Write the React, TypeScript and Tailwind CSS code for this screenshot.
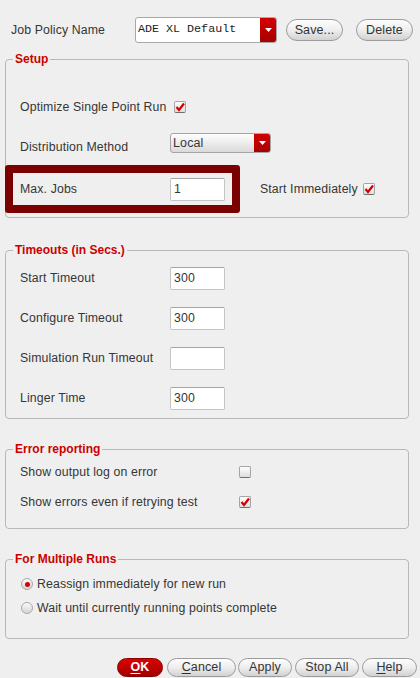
import type { ReactNode } from 'react';

function Check({ checked }: { checked?: boolean }) {
  return (
    <span className="relative flex h-[12px] w-[12px] shrink-0 items-center justify-center rounded-[2px] border border-[#a4a4a4] border-b-[#6f6f6f] bg-linear-to-b from-[#fdfdfd] to-[#dedede]">
      {checked ? (
        <svg width="10" height="10" viewBox="0 0 10 10">
          <path d="M1.5 5 L4 8 L9 1.5" fill="none" stroke="#d10000" strokeWidth="2.2" />
        </svg>
      ) : null}
    </span>
  );
}

function Radio({ on }: { on?: boolean }) {
  return (
    <span className="flex h-[12px] w-[12px] shrink-0 items-center justify-center rounded-full border border-[#a8a8a8] bg-linear-to-b from-[#fafafa] to-[#d4d4d4]">
      {on ? <span className="h-[5px] w-[5px] rounded-full bg-[#d60000]" /> : null}
    </span>
  );
}

function Arrow({ className }: { className: string }) {
  return (
    <span className={`flex items-center justify-center bg-linear-to-b from-[#d40000] to-[#a80000] ${className}`}>
      <svg width="7" height="4" viewBox="0 0 7 4">
        <path d="M0 0 H7 L3.5 4 Z" fill="#fff" />
      </svg>
    </span>
  );
}

function Field({ value }: { value?: string }) {
  return (
    <span className="flex h-[23px] w-[55px] shrink-0 items-center rounded-[2px] border border-[#c4c4c4] border-t-[#a6a6a6] bg-white pl-[3px] text-[12.3px]">
      {value}
    </span>
  );
}

function Btn({ children, className }: { children: ReactNode; className: string }) {
  return (
    <button className={`flex shrink-0 items-center justify-center rounded-full border border-[#9c9c9c] bg-linear-to-b from-[#fdfdfd] via-[#eeeeee] to-[#d2d2d2] text-[12.5px] text-[#333] ${className}`}>
      {children}
    </button>
  );
}

function Group({ title, className, children }: { title: string; className: string; children: ReactNode }) {
  return (
    <fieldset className={`ml-[5px] w-[404px] rounded-[4px] border border-[#b8b8b8] ${className}`}>
      <legend className="ml-[7px] px-[2px] text-[12px] leading-[14px] font-bold tracking-normal text-[#cc0000]">{title}</legend>
      {children}
    </fieldset>
  );
}

export default function App() {
  const timeouts = [
    ['Start Timeout', '300'],
    ['Configure Timeout', '300'],
    ['Simulation Run Timeout', ''],
    ['Linger Time', '300'],
  ];

  return (
    <div className="h-[678px] w-[420px] overflow-hidden bg-[#efefef] font-['Liberation_Sans',Arial,sans-serif] text-[12.3px] tracking-[0.12px] text-[#363636]">
      <div className="mt-[17px] flex h-[26px] items-center">
        <span className="w-[135px] pl-[11px]">Job Policy Name</span>
        <div className="flex h-[26px] w-[142px] overflow-hidden rounded-[3px] border border-[#a8a8a8] bg-white">
          <span className="flex flex-1 items-center pl-[2px] font-['Liberation_Mono',monospace] text-[11.7px] tracking-normal text-[#222]">
            ADE XL Default
          </span>
          <Arrow className="w-[16px]" />
        </div>
        <Btn className="ml-[9px] h-[22px] w-[57px]">Save...</Btn>
        <Btn className="ml-[13px] h-[22px] w-[57px]">Delete</Btn>
      </div>

      <Group title="Setup" className="mt-[9px] pb-[4px]">
        <div className="mt-[31px] flex h-[20px] items-center pl-[14px]">
          <span className="w-[154px]">Optimize Single Point Run</span>
          <Check checked />
        </div>
        <div className="mt-[16px] flex h-[20px] items-start pl-[14px]">
          <span className="w-[150px] pt-[7px] leading-[14px]">Distribution Method</span>
          <div className="flex h-[20px] w-[101px] overflow-hidden rounded-[3px] border border-[#a4a4a4] bg-linear-to-b from-[#ffffff] to-[#dadada]">
            <span className="flex flex-1 items-center pl-[2px] text-[12.5px]">Local</span>
            <Arrow className="w-[16px]" />
          </div>
        </div>
        <div className="mt-[12px] flex items-center">
          <div className="-ml-[1px] flex h-[48px] w-[235px] items-center rounded-[3px] border-[8px] border-[#7b0000]">
            <span className="w-[157px] pl-[7px]">Max. Jobs</span>
            <Field value="1" />
          </div>
          <span className="ml-[20px] w-[103px]">Start Immediately</span>
          <Check checked />
        </div>
      </Group>

      <Group title="Timeouts (in Secs.)" className="mt-[25px] pb-[8px]">
        <div className="mt-[10px] flex flex-col gap-[17px]">
          {timeouts.map(([label, value]) => (
            <div key={label} className="flex h-[23px] items-center pl-[14px]">
              <span className="w-[150px]">{label}</span>
              <Field value={value} />
            </div>
          ))}
        </div>
      </Group>

      <Group title="Error reporting" className="mt-[23px] pb-[16px]">
        <div className="mt-[6px] flex flex-col gap-[10px]">
          <div className="flex h-[20px] items-center pl-[14px]">
            <span className="w-[219px]">Show output log on error</span>
            <Check />
          </div>
          <div className="flex h-[20px] items-center pl-[14px]">
            <span className="w-[219px]">Show errors even if retrying test</span>
            <Check checked />
          </div>
        </div>
      </Group>

      <Group title="For Multiple Runs" className="mt-[23px] pb-[21px]">
        <div className="mt-[9px] flex flex-col gap-[6px]">
          <div className="flex h-[18px] items-center gap-[4px] pl-[15px]">
            <Radio on />
            <span>Reassign immediately for new run</span>
          </div>
          <div className="flex h-[18px] items-center gap-[4px] pl-[15px]">
            <Radio />
            <span>Wait until currently running points complete</span>
          </div>
        </div>
      </Group>

      <div className="mt-[19px] flex h-[19px] items-center">
        <button className="ml-[117px] flex h-[19px] w-[46px] items-center justify-center rounded-full border border-[#8a0000] bg-linear-to-b from-[#e00000] to-[#a00000] text-[12.5px] font-bold text-white">
          <span className="underline underline-offset-2">O</span>K
        </button>
        <Btn className="ml-[4px] h-[19px] w-[69px]">
          <span className="underline underline-offset-2">C</span>ancel
        </Btn>
        <Btn className="ml-[2px] h-[19px] w-[54px]">Apply</Btn>
        <Btn className="ml-[3px] h-[19px] w-[64px]">Stop All</Btn>
        <Btn className="ml-[3px] h-[19px] w-[55px]">
          <span className="underline underline-offset-2">H</span>elp
        </Btn>
      </div>
    </div>
  );
}
